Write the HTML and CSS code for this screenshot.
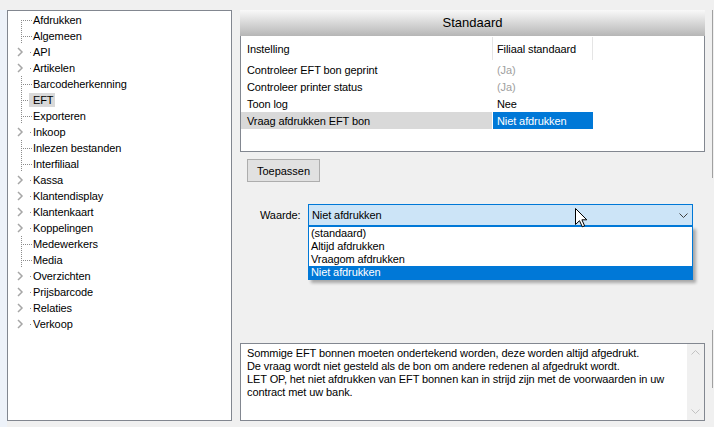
FILE: index.html
```html
<!DOCTYPE html>
<html>
<head>
<meta charset="utf-8">
<link rel="stylesheet" href="styles.css">
</head>
<body>
<div class="app">
  <div class="strip"></div>
  <div class="tree">
    <div class="node"><svg viewBox="0 0 25 16"><line class="dl" x1="13.5" y1="8" x2="13.5" y2="16"/><line class="dl" x1="15" y1="8.5" x2="24" y2="8.5"/></svg><span class="lbl">Afdrukken</span></div>
    <div class="node"><svg viewBox="0 0 25 16"><line class="dl" x1="13.5" y1="0" x2="13.5" y2="16"/><line class="dl" x1="15" y1="8.5" x2="24" y2="8.5"/></svg><span class="lbl">Algemeen</span></div>
    <div class="node"><svg viewBox="0 0 25 16"><polyline class="chev" points="10,4 14,8 10,12"/><rect class="dot" x="22" y="8" width="1" height="1"/></svg><span class="lbl">API</span></div>
    <div class="node"><svg viewBox="0 0 25 16"><polyline class="chev" points="10,4 14,8 10,12"/><rect class="dot" x="22" y="8" width="1" height="1"/></svg><span class="lbl">Artikelen</span></div>
    <div class="node"><svg viewBox="0 0 25 16"><line class="dl" x1="13.5" y1="0" x2="13.5" y2="16"/><line class="dl" x1="15" y1="8.5" x2="24" y2="8.5"/></svg><span class="lbl">Barcodeherkenning</span></div>
    <div class="node"><svg viewBox="0 0 25 16"><line class="dl" x1="13.5" y1="0" x2="13.5" y2="16"/><line class="dl" x1="15" y1="8.5" x2="24" y2="8.5"/></svg><span class="lbl sel">EFT</span></div>
    <div class="node"><svg viewBox="0 0 25 16"><line class="dl" x1="13.5" y1="0" x2="13.5" y2="16"/><line class="dl" x1="15" y1="8.5" x2="24" y2="8.5"/></svg><span class="lbl">Exporteren</span></div>
    <div class="node"><svg viewBox="0 0 25 16"><polyline class="chev" points="10,4 14,8 10,12"/><rect class="dot" x="22" y="8" width="1" height="1"/></svg><span class="lbl">Inkoop</span></div>
    <div class="node"><svg viewBox="0 0 25 16"><line class="dl" x1="13.5" y1="0" x2="13.5" y2="16"/><line class="dl" x1="15" y1="8.5" x2="24" y2="8.5"/></svg><span class="lbl">Inlezen bestanden</span></div>
    <div class="node"><svg viewBox="0 0 25 16"><line class="dl" x1="13.5" y1="0" x2="13.5" y2="16"/><line class="dl" x1="15" y1="8.5" x2="24" y2="8.5"/></svg><span class="lbl">Interfiliaal</span></div>
    <div class="node"><svg viewBox="0 0 25 16"><polyline class="chev" points="10,4 14,8 10,12"/><rect class="dot" x="22" y="8" width="1" height="1"/></svg><span class="lbl">Kassa</span></div>
    <div class="node"><svg viewBox="0 0 25 16"><polyline class="chev" points="10,4 14,8 10,12"/><rect class="dot" x="22" y="8" width="1" height="1"/></svg><span class="lbl">Klantendisplay</span></div>
    <div class="node"><svg viewBox="0 0 25 16"><polyline class="chev" points="10,4 14,8 10,12"/><rect class="dot" x="22" y="8" width="1" height="1"/></svg><span class="lbl">Klantenkaart</span></div>
    <div class="node"><svg viewBox="0 0 25 16"><polyline class="chev" points="10,4 14,8 10,12"/><rect class="dot" x="22" y="8" width="1" height="1"/></svg><span class="lbl">Koppelingen</span></div>
    <div class="node"><svg viewBox="0 0 25 16"><line class="dl" x1="13.5" y1="0" x2="13.5" y2="16"/><line class="dl" x1="15" y1="8.5" x2="24" y2="8.5"/></svg><span class="lbl">Medewerkers</span></div>
    <div class="node"><svg viewBox="0 0 25 16"><line class="dl" x1="13.5" y1="0" x2="13.5" y2="16"/><line class="dl" x1="15" y1="8.5" x2="24" y2="8.5"/></svg><span class="lbl">Media</span></div>
    <div class="node"><svg viewBox="0 0 25 16"><polyline class="chev" points="10,4 14,8 10,12"/><rect class="dot" x="22" y="8" width="1" height="1"/></svg><span class="lbl">Overzichten</span></div>
    <div class="node"><svg viewBox="0 0 25 16"><polyline class="chev" points="10,4 14,8 10,12"/><rect class="dot" x="22" y="8" width="1" height="1"/></svg><span class="lbl">Prijsbarcode</span></div>
    <div class="node"><svg viewBox="0 0 25 16"><polyline class="chev" points="10,4 14,8 10,12"/><rect class="dot" x="22" y="8" width="1" height="1"/></svg><span class="lbl">Relaties</span></div>
    <div class="node"><svg viewBox="0 0 25 16"><polyline class="chev" points="10,4 14,8 10,12"/><rect class="dot" x="22" y="8" width="1" height="1"/></svg><span class="lbl">Verkoop</span></div>
  </div>

  <div class="main">
    <div class="group-head">Standaard</div>
    <div class="grid">
      <div class="grow head"><div class="c1">Instelling</div><div class="c2">Filiaal standaard</div></div>
      <div class="grow"><div class="c1">Controleer EFT bon geprint</div><div class="c2 muted">(Ja)</div></div>
      <div class="grow"><div class="c1">Controleer printer status</div><div class="c2 muted">(Ja)</div></div>
      <div class="grow"><div class="c1">Toon log</div><div class="c2">Nee</div></div>
      <div class="grow sel"><div class="c1">Vraag afdrukken EFT bon</div><div class="c2">Niet afdrukken</div></div>
    </div>

    <button class="btn">Toepassen</button>

    <div class="field">
      <span class="flabel">Waarde:</span>
      <div class="combo">
        <span class="ctext">Niet afdrukken</span>
        <svg class="cchev" viewBox="0 0 9 5"><polyline points="0.5,0.5 4.5,4.5 8.5,0.5"/></svg>
        <div class="droplist">
          <div class="opt">(standaard)</div>
          <div class="opt">Altijd afdrukken</div>
          <div class="opt">Vraagom afdrukken</div>
          <div class="opt sel">Niet afdrukken</div>
        </div>
      </div>
    </div>

    <div class="desc">
      <div class="desc-text">Sommige EFT bonnen moeten ondertekend worden, deze worden altijd afgedrukt.<br>De vraag wordt niet gesteld als de bon om andere redenen al afgedrukt wordt.<br>LET OP, het niet afdrukken van EFT bonnen kan in strijd zijn met de voorwaarden in uw<br>contract met uw bank.</div>
      <div class="vscroll">
        <div class="sbtn"><svg viewBox="0 0 9 5"><polyline points="0.5,4.5 4.5,0.5 8.5,4.5"/></svg></div>
        <div class="sbtn"><svg viewBox="0 0 9 5"><polyline points="0.5,0.5 4.5,4.5 8.5,0.5"/></svg></div>
      </div>
    </div>
  </div>

  <div class="edge">
    <div class="edge-seg top"></div>
    <div class="edge-seg bottom"></div>
  </div>
</div>
<svg class="cursor" viewBox="0 0 12 20" width="12" height="20"><path d="M0.5,0.5 L0.5,16.5 L4.5,12.7 L7.3,18.8 L9.6,17.8 L6.9,11.8 L11.8,11.8 Z"/></svg>
</body>
</html>
```
FILE: styles.css
```css
html, body {
  margin: 0;
  padding: 0;
}
body {
  background: #f0f0f0;
  font-family: "Liberation Sans", Arial, sans-serif;
  font-size: 11px;
  letter-spacing: -0.1px;
  color: #000;
  width: 714px;
  height: 427px;
  overflow: hidden;
  position: relative;
}
.app {
  display: flex;
  width: 714px;
  height: 427px;
  padding-top: 10px;
  box-sizing: border-box;
}
.strip {
  width: 7px;
  flex: none;
  background: #edf2f9;
}

/* tree */
.tree {
  width: 225px;
  height: 411px;
  flex: none;
  box-sizing: border-box;
  border: 1px solid #828790;
  background: #fff;
  padding-top: 1px;
}
.node {
  display: flex;
  align-items: center;
  height: 16px;
}
.node svg {
  width: 25px;
  height: 16px;
  flex: none;
  display: block;
}
.dl {
  stroke: #8c8c8c;
  stroke-width: 1;
  stroke-dasharray: 1 1;
  fill: none;
}
.chev {
  stroke: #a6a6a6;
  stroke-width: 1.5;
  fill: none;
}
.dot {
  fill: #8c8c8c;
}
.lbl {
  margin-left: -4px;
  padding: 0 2px 0 4px;
  line-height: 14px;
  white-space: nowrap;
}
.lbl.sel {
  background: #d9d9d9;
}

/* main */
.main {
  width: 465px;
  height: 411px;
  flex: none;
  margin-left: 8px;
  display: flex;
  flex-direction: column;
}
.group-head {
  height: 26px;
  flex: none;
  background: linear-gradient(#f9f9f9, #b6b6b6);
  font-size: 13px;
  letter-spacing: 0;
  line-height: 25px;
  text-align: center;
}
.grid {
  height: 116px;
  flex: none;
  box-sizing: border-box;
  border: 1px solid #828790;
  border-top: 0;
  background: #fff;
}
.grow {
  display: flex;
  height: 17px;
}
.grow > div {
  display: flex;
  align-items: center;
  box-sizing: border-box;
  white-space: nowrap;
}
.c1 {
  width: 251px;
  padding-left: 6px;
}
.c2 {
  width: 100px;
  padding-left: 5px;
}
.grow.head {
  height: 25px;
  align-items: center;
}
.grow.head > div {
  height: 23px;
  border-right: 1px solid #e5e5e5;
}
.grow.head .c1 {
  width: 252px;
}
.grow.head .c2 {
  width: 100px;
  padding-left: 4px;
}
.muted {
  color: #a0a0a0;
}
.grow.sel .c1 {
  background: #d9d9d9;
}
.grow.sel .c2 {
  background: #0078d7;
  color: #fff;
  margin-left: 1px;
  padding-left: 4px;
}

/* button */
.btn {
  align-self: flex-start;
  margin: 7px 0 0 7px;
  width: 73px;
  height: 23px;
  padding: 0;
  border: 1px solid #adadad;
  background: #e1e1e1;
  font: inherit;
  color: #000;
}

/* field */
.field {
  display: flex;
  align-items: center;
  margin-top: 22px;
  padding-left: 20px;
}
.flabel {
  width: 48px;
  flex: none;
}
.combo {
  position: relative;
  width: 385px;
  height: 22px;
  box-sizing: border-box;
  border: 1px solid #0078d7;
  background: #cce4f7;
  display: flex;
  align-items: center;
  padding-left: 3px;
}
.cchev {
  width: 9px;
  height: 5px;
  margin-left: auto;
  margin-right: 4px;
  display: block;
}
.cchev polyline {
  stroke: #404040;
  stroke-width: 1;
  fill: none;
}
.droplist {
  position: absolute;
  left: -1px;
  top: calc(100% + 1px);
  width: 385px;
  box-sizing: border-box;
  border: 1px solid #0078d7;
  background: #fff;
  box-shadow: 3px 3px 3px rgba(0, 0, 0, 0.3);
}
.opt {
  height: 13px;
  line-height: 13px;
  padding-left: 2px;
  white-space: nowrap;
}
.opt.sel {
  background: #0078d7;
  color: #fff;
}

/* description */
.desc {
  margin-top: auto;
  height: 78px;
  flex: none;
  box-sizing: border-box;
  border: 1px solid #828790;
  background: #fff;
  display: flex;
}
.desc-text {
  flex: 1;
  padding: 3px 0 0 6px;
  line-height: 13px;
  white-space: nowrap;
  overflow: hidden;
}
.vscroll {
  width: 17px;
  flex: none;
  background: #f0f0f0;
  display: flex;
  flex-direction: column;
  justify-content: space-between;
}
.sbtn {
  height: 17px;
  display: flex;
  align-items: center;
  justify-content: center;
}
.sbtn svg {
  width: 9px;
  height: 5px;
  display: block;
}
.sbtn polyline {
  stroke: #c2c2c2;
  stroke-width: 1;
  fill: none;
}

/* right edge */
.edge {
  width: 1px;
  margin-left: 7px;
  flex: none;
  display: flex;
  flex-direction: column;
}
.edge-seg {
  background: #a0a0a0;
}
.edge-seg.top {
  height: 168px;
}
.edge-seg.bottom {
  height: 58px;
  margin-top: 152px;
}

/* mouse cursor overlay */
.cursor {
  position: absolute;
  left: 575px;
  top: 208px;
}
.cursor path {
  fill: #fff;
  stroke: #000;
  stroke-width: 1;
  stroke-linejoin: miter;
}
```
